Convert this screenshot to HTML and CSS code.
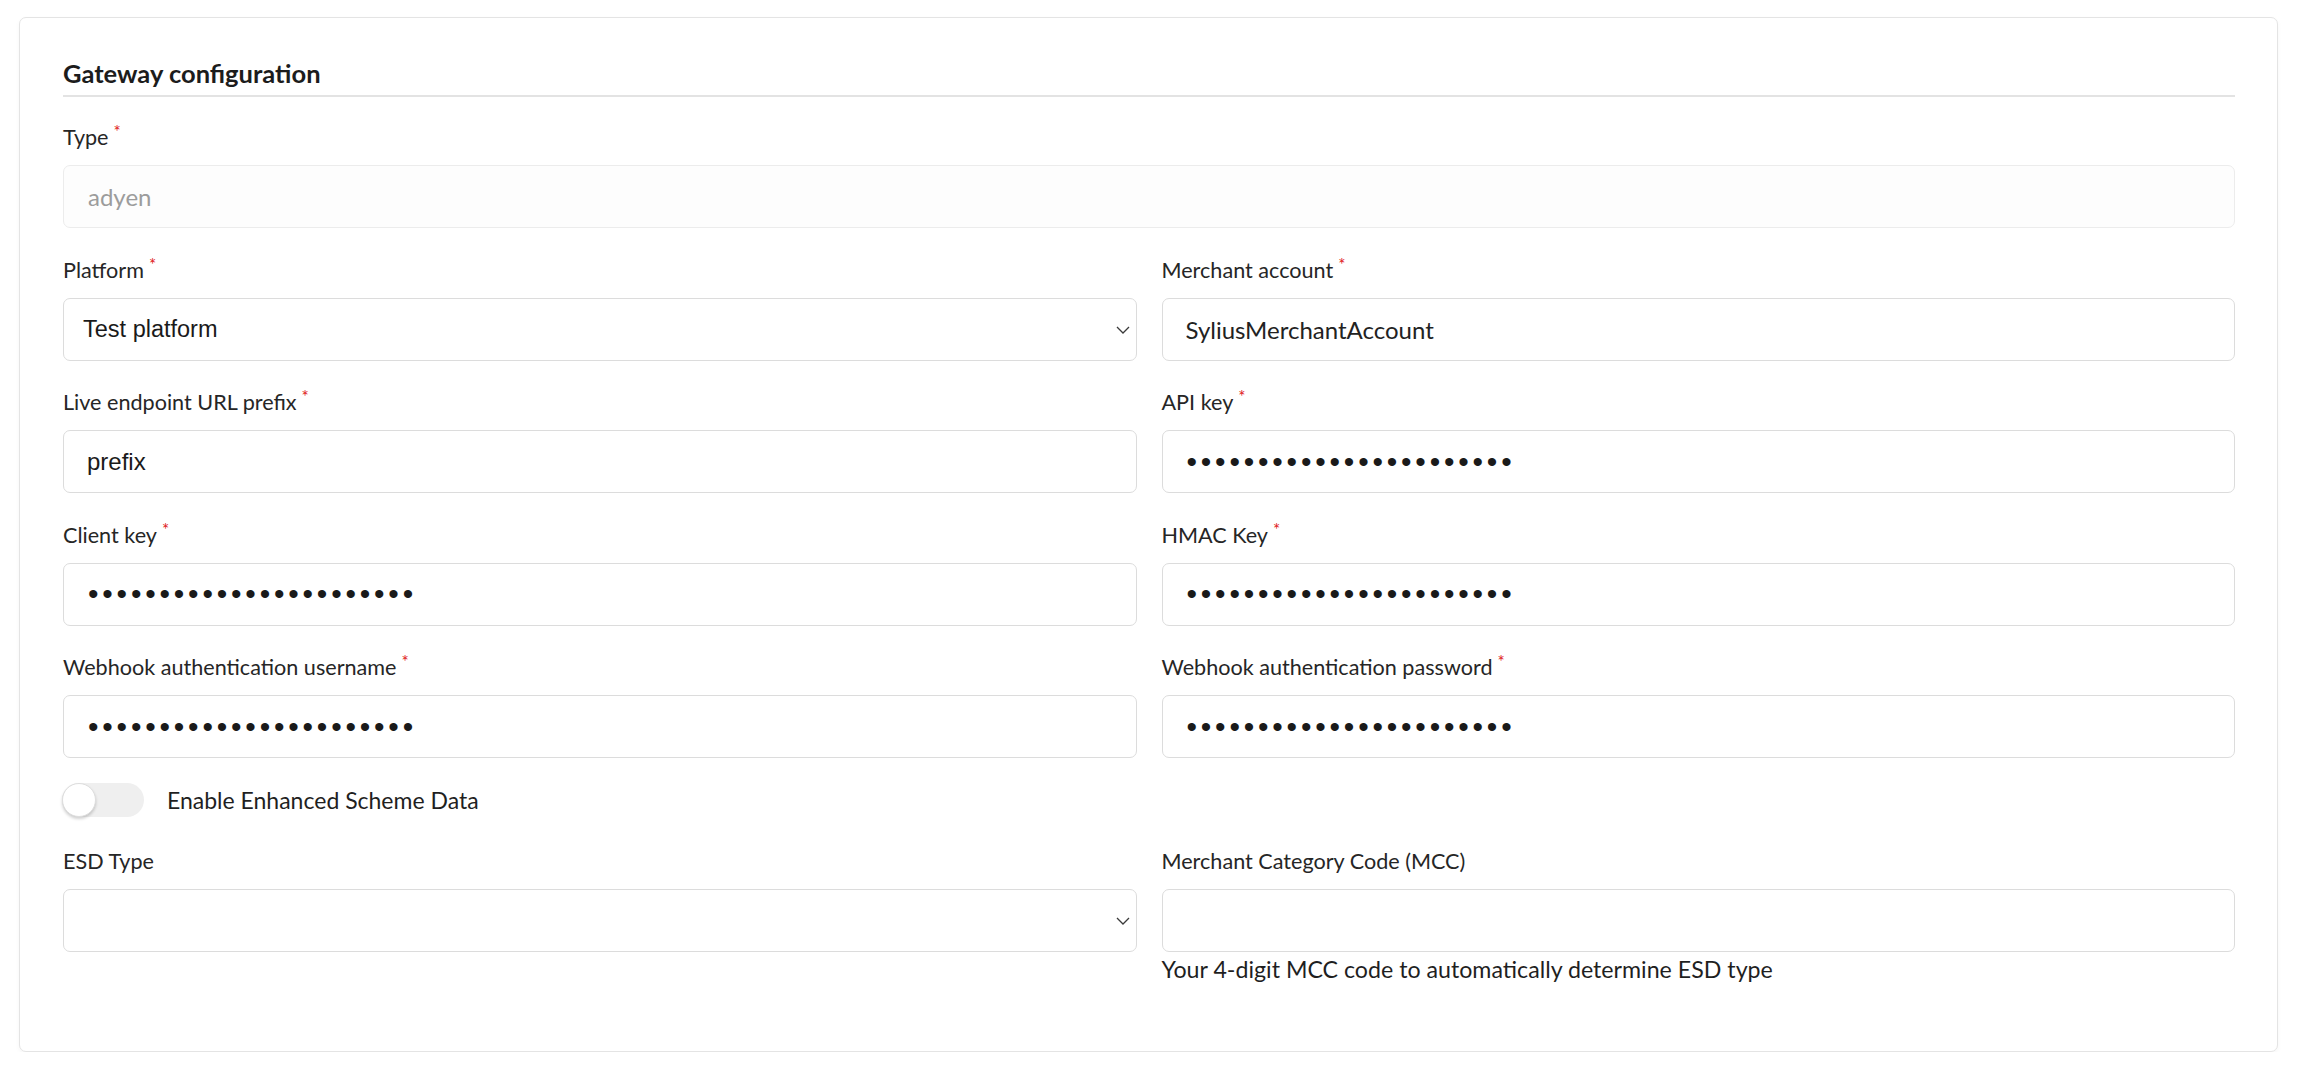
FILE: index.html
```html
<!DOCTYPE html>
<html lang="en">
<head>
<meta charset="utf-8">
<title>Gateway configuration</title>
<link rel="stylesheet" href="styles.css">
</head>
<body>
<div class="card">
  <h2 class="section-title">Gateway configuration</h2>

  <div class="field">
    <label class="label">Type<span class="req">*</span></label>
    <input class="control control-disabled" type="text" value="adyen" disabled>
  </div>

  <div class="grid">
    <div class="field">
      <label class="label">Platform<span class="req">*</span></label>
      <div class="select-wrap">
        <select class="control control-select">
          <option>Test platform</option>
          <option>Live platform</option>
        </select>
        <svg class="chevron" width="14" height="8" viewBox="0 0 14 8"><path d="M1 1l6 6 6-6" fill="none" stroke="#3a3a3a" stroke-width="1.3"/></svg>
      </div>
    </div>
    <div class="field">
      <label class="label">Merchant account<span class="req">*</span></label>
      <input class="control" type="text" value="SyliusMerchantAccount">
    </div>

    <div class="field">
      <label class="label">Live endpoint URL prefix<span class="req">*</span></label>
      <input class="control control-sans" type="text" value="prefix">
    </div>
    <div class="field">
      <label class="label">API key<span class="req">*</span></label>
      <input class="control control-pass" type="password" value="xxxxxxxxxxxxxxxxxxxxxxx">
    </div>

    <div class="field">
      <label class="label">Client key<span class="req">*</span></label>
      <input class="control control-pass" type="password" value="xxxxxxxxxxxxxxxxxxxxxxx">
    </div>
    <div class="field">
      <label class="label">HMAC Key<span class="req">*</span></label>
      <input class="control control-pass" type="password" value="xxxxxxxxxxxxxxxxxxxxxxx">
    </div>

    <div class="field">
      <label class="label">Webhook authentication username<span class="req">*</span></label>
      <input class="control control-pass" type="password" value="xxxxxxxxxxxxxxxxxxxxxxx">
    </div>
    <div class="field">
      <label class="label">Webhook authentication password<span class="req">*</span></label>
      <input class="control control-pass" type="password" value="xxxxxxxxxxxxxxxxxxxxxxx">
    </div>

    <div class="toggle-row">
      <span class="toggle"><span class="knob"></span></span>
      <span class="toggle-label">Enable Enhanced Scheme Data</span>
    </div>

    <div class="field">
      <label class="label">ESD Type</label>
      <div class="select-wrap">
        <select class="control control-select">
          <option></option>
        </select>
        <svg class="chevron" width="14" height="8" viewBox="0 0 14 8"><path d="M1 1l6 6 6-6" fill="none" stroke="#3a3a3a" stroke-width="1.3"/></svg>
      </div>
    </div>
    <div class="field">
      <label class="label">Merchant Category Code (MCC)</label>
      <input class="control" type="text" value="">
      <div class="help">Your 4-digit MCC code to automatically determine ESD type</div>
    </div>
  </div>
</div>
</body>
</html>
```

FILE: styles.css
```css
* {
  box-sizing: border-box;
}

html, body {
  margin: 0;
  padding: 0;
  background: #ffffff;
}

body {
  font-family: Lato, "Liberation Sans", sans-serif;
  color: #262626;
  padding: 17px 26px 0 19px;
}

.card {
  background: #fff;
  border: 1px solid #e4e4e4;
  border-radius: 7px;
  box-shadow: 0 2px 5px rgba(0, 0, 0, 0.04);
  padding: 41px 42px 70px 43px;
}

.section-title {
  margin: 0 0 28px 0;
  font-size: 25.5px;
  line-height: 29px;
  font-weight: 700;
  color: #1c1c1c;
  padding-bottom: 7px;
  border-bottom: 2px solid #e3e3e3;
}

.field {
  display: flex;
  flex-direction: column;
}

.field + .grid {
  margin-top: 29.5px;
}

.label {
  font-size: 21.6px;
  line-height: 24px;
  margin-bottom: 16px;
  color: #262626;
}

.req {
  color: #e0201b;
  font-size: 17px;
  line-height: 0;
  margin-left: 5px;
  position: relative;
  top: -7px;
}

.grid {
  display: grid;
  grid-template-columns: 1fr 1fr;
  column-gap: 25px;
  row-gap: 29.5px;
}

.control {
  height: 63px;
  width: 100%;
  border: 1px solid #dcdcdc;
  border-radius: 7px;
  background: #fff;
  padding: 0 23px;
  font-family: Lato, sans-serif;
  font-size: 24px;
  color: #222;
  outline: none;
}

.control-disabled {
  border-color: #ececec;
  background: #fdfdfd;
  color: #9c9c9c;
  padding-left: 24px;
}

.control-sans {
  font-family: "Liberation Sans", Arial, sans-serif;
  font-size: 24px;
  color: #1a1a1a;
}

.control-pass {
  font-family: "Liberation Sans", Arial, sans-serif;
  font-size: 30px;
  letter-spacing: 3.8px;
  color: #1a1a1a;
  padding-left: 24px;
}

.select-wrap {
  position: relative;
}

.control-select {
  appearance: none;
  -webkit-appearance: none;
  font-family: "Liberation Sans", Arial, sans-serif;
  font-size: 23.5px;
  color: #1a1a1a;
  padding-left: 19px;
}

.chevron {
  position: absolute;
  right: 7px;
  top: 28px;
  pointer-events: none;
}

.toggle-row {
  grid-column: 1 / -1;
  display: flex;
  align-items: center;
  gap: 23px;
  margin-top: -4.5px;
  padding-bottom: 2px;
}

.toggle {
  width: 82px;
  height: 34px;
  border-radius: 17px;
  background: #efefef;
  display: flex;
  align-items: center;
  margin-left: -1px;
}

.knob {
  width: 34px;
  height: 34px;
  border-radius: 50%;
  background: #fff;
  border: 1px solid #dedede;
  box-shadow: 0 2px 3px rgba(0, 0, 0, 0.18);
}

.toggle-label {
  font-size: 23px;
  color: #1f1f1f;
}

.help {
  margin-top: 5px;
  font-size: 23.2px;
  line-height: 24px;
  color: #1f1f1f;
}
```
